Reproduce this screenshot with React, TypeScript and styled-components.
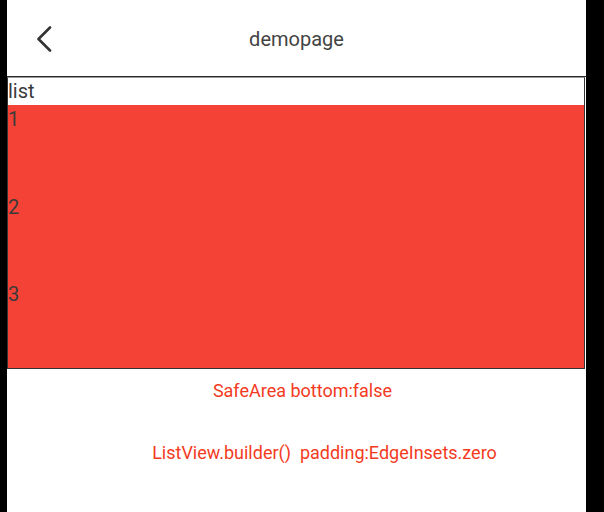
import * as React from 'react';
import styled, { createGlobalStyle } from 'styled-components';

const GlobalStyle = createGlobalStyle`
  html, body {
    margin: 0;
    padding: 0;
    background: #000;
  }
  body {
    font-family: Roboto, "Noto Sans", "Liberation Sans", sans-serif;
  }
`;

const items = ['1', '2', '3'];

export default function App () {
  return (
    <>
      <GlobalStyle />
      <Screen>
        <Header>
          <BackButton aria-label="back">
            <svg width="18" height="26" viewBox="0 0 18 26" fill="none">
              <path d="M15 1.5 L3.5 13 L15 24.5" stroke="#333" strokeWidth="2.6" strokeLinecap="round" strokeLinejoin="round" />
            </svg>
          </BackButton>
          <Title>demopage</Title>
        </Header>
        <ListBox>
          <ListLabel>list</ListLabel>
          <RedList>
            {
              items.map( ( item ) => <Item key={ item }>{ item }</Item> )
            }
          </RedList>
        </ListBox>
        <Note offset={ 12 } top={ 11 }>SafeArea bottom:false</Note>
        <Note offset={ 56 } top={ 40 }>ListView.builder()  padding:EdgeInsets.zero</Note>
      </Screen>
    </>
  );
}

const Screen = styled.div`
  margin-left: 7px;
  width: 579px;
  height: 512px;
  background: #fff;
  overflow: hidden;
`;

const Header = styled.div`
  position: relative;
  height: 76px;
  display: flex;
  align-items: center;
  justify-content: center;
  border-bottom: 1px solid #2a2a2a;
`;

const BackButton = styled.div`
  position: absolute;
  left: 28px;
  top: 26px;
  display: flex;
`;

const Title = styled.div`
  font-size: 20px;
  color: #444;
  margin-top: 1px;
`;

const ListBox = styled.div`
  box-sizing: border-box;
  width: 578px;
  height: 292px;
  border: 1px solid #333;
  border-top-color: #999;
  display: flex;
  flex-direction: column;
`;

const ListLabel = styled.div`
  height: 27px;
  line-height: 27px;
  font-size: 20px;
  color: #3a3a3a;
`;

const RedList = styled.div`
  flex: 1;
  background: #f44336;
  display: flex;
  flex-direction: column;
`;

const Item = styled.div`
  flex: 1;
  font-size: 20px;
  line-height: 28px;
  color: #3a3a3a;
`;

const Note = styled.div<{ offset: number, top: number }>`
  margin-top: ${ p => p.top }px;
  padding-left: ${ p => p.offset }px;
  text-align: center;
  font-size: 18px;
  line-height: 22px;
  color: #f43a22;
  white-space: pre;
`;
